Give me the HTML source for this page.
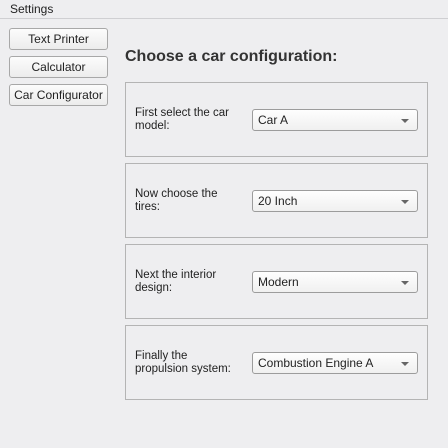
<!DOCTYPE html><html><head><style>
body{margin:0;width:448px;height:448px;background:#eeeef0;font-family:"Liberation Sans",sans-serif;font-size:12px;color:#222;position:relative;overflow:hidden}
.hdr{position:absolute;left:0;top:0;width:448px;height:18px;border-bottom:1px solid #cfcfd2;}
.hdr span{position:absolute;left:10px;top:2px}
.btn{position:absolute;left:9px;width:97px;height:20px;border:1px solid #a8a8a8;border-radius:3px;background:linear-gradient(#fcfcfc,#ececec);text-align:center;line-height:20px}
h1{position:absolute;left:125px;top:48px;margin:0;font-size:16px;font-weight:bold;color:#333}
.p{position:absolute;left:125px;width:301px;height:73px;border:1px solid #b4b4b4}
.l{position:absolute;left:9px;top:24px;line-height:13px;font-size:11.5px}
.c{position:absolute;left:126px;top:26px;width:164px;height:20px;border:1px solid #9c9c9c;border-radius:3px;background:linear-gradient(#fefefe,#f0f0f0);line-height:20px}
.c span{position:absolute;left:5px}
.c i{position:absolute;right:8px;top:9px;border-left:4px solid transparent;border-right:4px solid transparent;border-top:4px solid #666}
</style></head><body>
<div class="hdr"><span>Settings</span></div>
<div class="btn" style="top:28px">Text Printer</div>
<div class="btn" style="top:56px">Calculator</div>
<div class="btn" style="top:84px">Car Configurator</div>
<h1>Choose a car configuration:</h1>
<div class="p" style="top:82px"><div class="l">First select the car<br>model:</div><div class="c"><span>Car A</span><i></i></div></div>
<div class="p" style="top:163px"><div class="l">Now choose the<br>tires:</div><div class="c"><span>20 Inch</span><i></i></div></div>
<div class="p" style="top:244px"><div class="l">Next the interior<br>design:</div><div class="c"><span>Modern</span><i></i></div></div>
<div class="p" style="top:325px"><div class="l">Finally the<br>propulsion system:</div><div class="c"><span>Combustion Engine A</span><i></i></div></div>
</body></html>
